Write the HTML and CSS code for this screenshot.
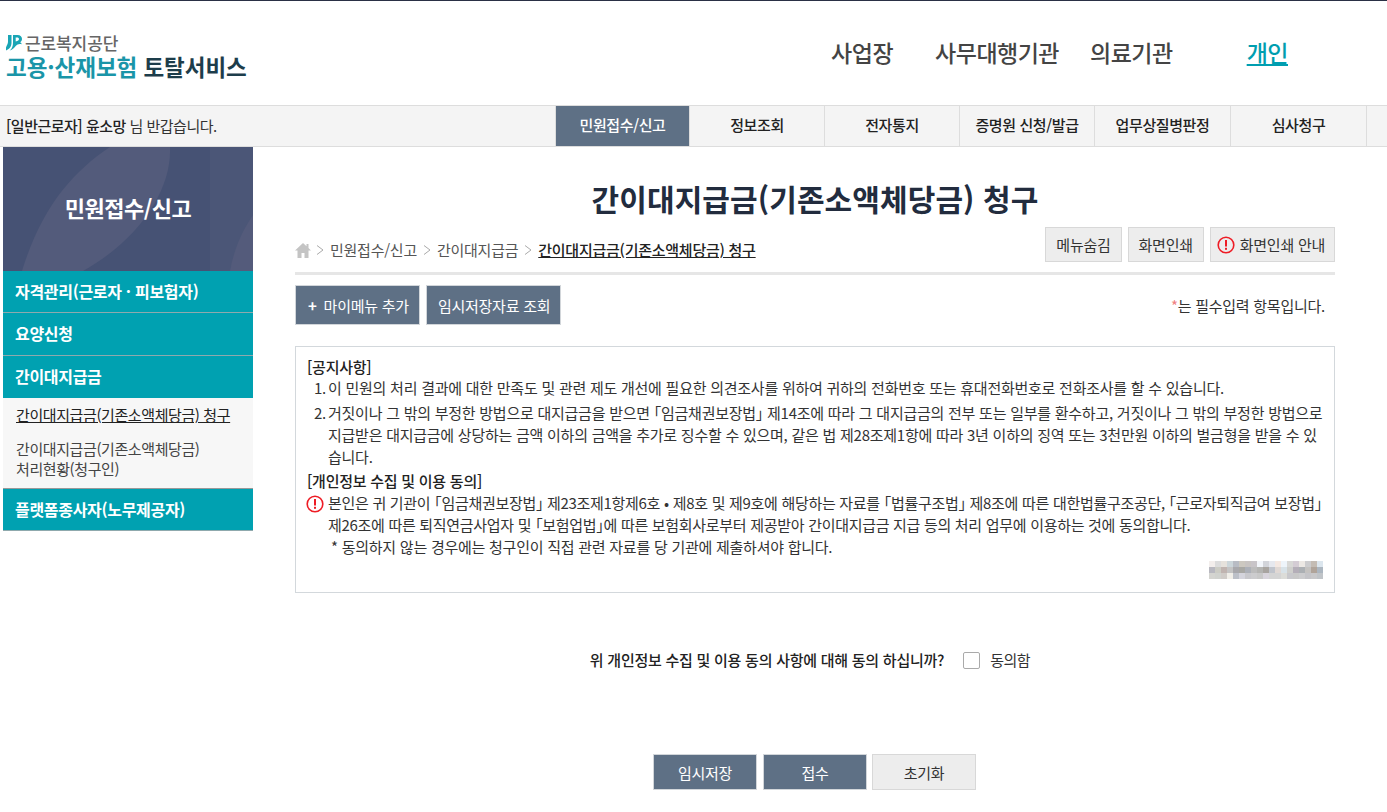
FILE: index.html
```html
<!DOCTYPE html>
<html lang="ko">
<head>
    <meta charset="UTF-8">
    <title>간이대지급금(기존소액체당금) 청구</title>
    <link rel="stylesheet" href="styles.css">
</head>
<body>
    <header class="header">
        <div class="logo">
            <div class="logo-top">
                <svg class="logo-mark" width="16" height="16" viewBox="0 0 16 16">
                    <path d="M2 0h3.500v7.500C5.500 11 4 14 0 15.500c-.5-3 .5-4.500 1.300-6C2 8 2 7 2 6z" fill="#19a5b5"/>
                    <path d="M7 0h4.500C14.500 0 16 1.800 16 4c0 1.500-.8 2.700-2 3.300 1 .4 1.500 1 1.700 2-2-.8-4.500-.3-6 1.700-1.200 1.800-3 3.500-6 4.500 2.500-2 3.300-4.500 3.300-8z" fill="#19a5b5"/>
                    <path d="M9.700 2.400h1.500c1 0 1.800.6 1.800 1.600s-1 1.900-3.300 2.600z" fill="#fff"/>
                </svg>
                <span class="logo-org">근로복지공단</span>
            </div>
            <div class="logo-name"><span class="logo-teal">고용·산재보험</span> 토탈서비스</div>
        </div>
        <nav class="user-nav">
            <a class="un-1">사업장</a>
            <a class="un-2">사무대행기관</a>
            <a class="un-3">의료기관</a>
            <a class="un-4 on">개인</a>
        </nav>
    </header>

    <div class="gnb">
        <p class="welcome"><b>[일반근로자]</b> <b>윤소망</b> 님 반갑습니다.</p>
        <ul class="gnb-list">
            <li class="on w1">민원접수/신고</li>
            <li class="w2">정보조회</li>
            <li class="w2">전자통지</li>
            <li class="w3">증명원 신청/발급</li>
            <li class="w4">업무상질병판정</li>
            <li class="w4 last">심사청구</li>
        </ul>
    </div>

    <div class="wrap">
        <aside class="side">
            <div class="side-title">
                <svg class="side-bg" width="250" height="124" viewBox="0 0 250 124">
                    <path d="M19 124C38 62 68 26 107 0h60c2 42-30 92-87 124z" fill="#535b7b"/>
                    <rect x="207" y="0" width="43" height="124" fill="#4b5677"/>
                    <path d="M227 124c4-22 12-40 23-56v56z" fill="#545b7b"/>
                </svg>
                <span>민원접수/신고</span>
            </div>
            <div class="side-item">자격관리(근로자 · 피보험자)</div>
            <div class="side-item">요양신청</div>
            <div class="side-item no-line">간이대지급금</div>
            <ul class="side-sub">
                <li class="cur">간이대지급금(기존소액체당금) 청구</li>
                <li>간이대지급금(기존소액체당금)<br>처리현황(청구인)</li>
            </ul>
            <div class="side-item">플랫폼종사자(노무제공자)</div>
        </aside>

        <main class="main">
            <h1 class="title">간이대지급금(기존소액체당금) 청구</h1>
            <div class="path-row">
                <div class="path">
                    <svg class="home" width="16" height="16" viewBox="0 0 16 16">
                        <path d="M8 1L0 8.500h2.500V16h4v-5h3v5h4V8.500H16l-2.500-2.400V2h-2v2.200z" fill="#c4c4c4"/>
                    </svg>
                    <svg class="gt" width="8" height="10" viewBox="0 0 8 10"><path d="M1 .5L7 5 1 9.500" fill="none" stroke="#aaa"/></svg>민원접수/신고<svg class="gt" width="8" height="10" viewBox="0 0 8 10"><path d="M1 .5L7 5 1 9.500" fill="none" stroke="#aaa"/></svg>간이대지급금<svg class="gt" width="8" height="10" viewBox="0 0 8 10"><path d="M1 .5L7 5 1 9.500" fill="none" stroke="#aaa"/></svg><b class="path-cur">간이대지급금(기존소액체당금) 청구</b>
                </div>
                <div class="tools">
                    <button class="btn-gray">메뉴숨김</button>
                    <button class="btn-gray">화면인쇄</button>
                    <button class="btn-gray btn-info">
                        <svg width="18" height="18" viewBox="0 0 18 18">
                            <circle cx="9" cy="9" r="7.800" fill="none" stroke="#ee1c25" stroke-width="1.600"/>
                            <rect x="8" y="4" width="2" height="6.500" fill="#ee1c25"/>
                            <rect x="8" y="11.800" width="2" height="2" fill="#ee1c25"/>
                        </svg>
                        화면인쇄 안내
                    </button>
                </div>
            </div>
            <div class="act-row">
                <button class="btn-dark btn-plus"><span class="plus">+</span>마이메뉴 추가</button>
                <button class="btn-dark btn-tmp">임시저장자료 조회</button>
                <p class="req"><i>*</i>는 필수입력 항목입니다.</p>
            </div>

            <section class="notice">
                <h2>[공지사항]</h2>
                <ol>
                    <li>이 민원의 처리 결과에 대한 만족도 및 관련 제도 개선에 필요한 의견조사를 위하여 귀하의 전화번호 또는 휴대전화번호로 전화조사를 할 수 있습니다.</li>
                    <li>거짓이나 그 밖의 부정한 방법으로 대지급금을 받으면 「임금채권보장법」 제14조에 따라 그 대지급금의 전부 또는 일부를 환수하고, 거짓이나 그 밖의 부정한 방법으로<br>지급받은 대지급금에 상당하는 금액 이하의 금액을 추가로 징수할 수 있으며, 같은 법 제28조제1항에 따라 3년 이하의 징역 또는 3천만원 이하의 벌금형을 받을 수 있<br>습니다.</li>
                </ol>
                <h2>[개인정보 수집 및 이용 동의]</h2>
                <div class="agree-text">
                    <svg width="18" height="18" viewBox="0 0 18 18">
                        <circle cx="9" cy="9" r="7.800" fill="none" stroke="#ee1c25" stroke-width="1.600"/>
                        <rect x="8" y="4" width="2" height="6.500" fill="#ee1c25"/>
                        <rect x="8" y="11.800" width="2" height="2" fill="#ee1c25"/>
                    </svg>
                    <p>본인은 귀 기관이 「임금채권보장법」 제23조제1항제6호 • 제8호 및 제9호에 해당하는 자료를 「법률구조법」 제8조에 따른 대한법률구조공단, 「근로자퇴직급여 보장법」<br>제26조에 따른 퇴직연금사업자 및 「보험업법」에 따른 보험회사로부터 제공받아 간이대지급금 지급 등의 처리 업무에 이용하는 것에 동의합니다.</p>
                </div>
                <p class="note">* 동의하지 않는 경우에는 청구인이 직접 관련 자료를 당 기관에 제출하셔야 합니다.</p>
                <svg class="mosaic" width="114" height="18" viewBox="0 0 19 3" shape-rendering="crispEdges">
                    <g id="r1">
                        <rect x="0" y="0" width="1" height="1" fill="#f3eeec"/><rect x="1" y="0" width="1" height="1" fill="#dcdcdc"/><rect x="2" y="0" width="1" height="1" fill="#e6e2dc"/><rect x="3" y="0" width="1" height="1" fill="#ccd6da"/><rect x="4" y="0" width="1" height="1" fill="#b8bcc4"/><rect x="5" y="0" width="1" height="1" fill="#ccc8c0"/><rect x="6" y="0" width="1" height="1" fill="#c8c4c2"/><rect x="7" y="0" width="1" height="1" fill="#c8c4c8"/><rect x="8" y="0" width="1" height="1" fill="#f2f5fa"/><rect x="9" y="0" width="1" height="1" fill="#d2d4da"/><rect x="10" y="0" width="1" height="1" fill="#e6e8ee"/><rect x="11" y="0" width="1" height="1" fill="#f4e8e2"/><rect x="12" y="0" width="1" height="1" fill="#eef4fa"/><rect x="13" y="0" width="1" height="1" fill="#d8d8d6"/><rect x="14" y="0" width="1" height="1" fill="#d4ccd4"/><rect x="15" y="0" width="1" height="1" fill="#ece8e4"/><rect x="16" y="0" width="1" height="1" fill="#ccccce"/><rect x="17" y="0" width="1" height="1" fill="#c4bcb4"/><rect x="18" y="0" width="1" height="1" fill="#dce6ee"/>
                    </g>
                    <g id="r2">
                        <rect x="0" y="1" width="1" height="1" fill="#b8b8c0"/><rect x="1" y="1" width="1" height="1" fill="#ccccc4"/><rect x="2" y="1" width="1" height="1" fill="#c0b4b0"/><rect x="3" y="1" width="1" height="1" fill="#c4c4c4"/><rect x="4" y="1" width="1" height="1" fill="#a8a8ac"/><rect x="5" y="1" width="1" height="1" fill="#a8a8a4"/><rect x="6" y="1" width="1" height="1" fill="#acb0b8"/><rect x="7" y="1" width="1" height="1" fill="#bcbcbc"/><rect x="8" y="1" width="1" height="1" fill="#b4b4b2"/><rect x="9" y="1" width="1" height="1" fill="#a8a4a0"/><rect x="10" y="1" width="1" height="1" fill="#c0c4cc"/><rect x="11" y="1" width="1" height="1" fill="#e0d8d4"/><rect x="12" y="1" width="1" height="1" fill="#d8e2e8"/><rect x="13" y="1" width="1" height="1" fill="#cfcfcc"/><rect x="14" y="1" width="1" height="1" fill="#b4aeb8"/><rect x="15" y="1" width="1" height="1" fill="#acb0b4"/><rect x="16" y="1" width="1" height="1" fill="#c4c2c0"/><rect x="17" y="1" width="1" height="1" fill="#b0a49a"/><rect x="18" y="1" width="1" height="1" fill="#acb6c0"/>
                    </g>
                    <g id="r3">
                        <rect x="0" y="2" width="1" height="1" fill="#d4d4d0"/><rect x="1" y="2" width="1" height="1" fill="#d0d2ce"/><rect x="2" y="2" width="1" height="1" fill="#d0ccc8"/><rect x="3" y="2" width="1" height="1" fill="#f0eee8"/><rect x="4" y="2" width="1" height="1" fill="#bcc0c8"/><rect x="5" y="2" width="1" height="1" fill="#d4d4dc"/><rect x="6" y="2" width="1" height="1" fill="#c8c8cc"/><rect x="7" y="2" width="1" height="1" fill="#ccccce"/><rect x="8" y="2" width="1" height="1" fill="#c8c8c8"/><rect x="9" y="2" width="1" height="1" fill="#d8d4dc"/><rect x="10" y="2" width="1" height="1" fill="#d4d4d4"/><rect x="11" y="2" width="1" height="1" fill="#d4d4d4"/><rect x="12" y="2" width="1" height="1" fill="#dcdcd8"/><rect x="13" y="2" width="1" height="1" fill="#c8c8cc"/><rect x="14" y="2" width="1" height="1" fill="#c8c8c8"/><rect x="15" y="2" width="1" height="1" fill="#ccccce"/><rect x="16" y="2" width="1" height="1" fill="#c4c4c8"/><rect x="17" y="2" width="1" height="1" fill="#c8c8ca"/><rect x="18" y="2" width="1" height="1" fill="#c0c4c8"/>
                    </g>
                </svg>
            </section>

            <div class="agree-row">
                <b>위 개인정보 수집 및 이용 동의 사항에 대해 동의 하십니까?</b>
                <span class="check"></span>
                <span class="check-label">동의함</span>
            </div>

            <div class="bottom-btns">
                <button class="btn-dark btn-b">임시저장</button>
                <button class="btn-dark btn-b">접수</button>
                <button class="btn-gray btn-b btn-reset">초기화</button>
            </div>
        </main>
    </div>
</body>
</html>
```
FILE: styles.css
```css
* {
    box-sizing: border-box;
}
body {
    margin: 0;
    border-top: 1px solid #2a3045;
    background: #fff;
    color: #333;
    font-family: "Noto Sans CJK KR", "Noto Sans", sans-serif;
    font-size: 15px;
    letter-spacing: -0.25px;
}
ul, ol {
    list-style: none;
    margin: 0;
    padding: 0;
}
p, h1, h2 {
    margin: 0;
}
button {
    font-family: inherit;
    letter-spacing: inherit;
    cursor: pointer;
}

/* header */
.header {
    height: 104px;
    display: flex;
    justify-content: space-between;
    padding: 32px 0 0 6px;
}
.logo-top {
    display: flex;
    align-items: center;
    gap: 3px;
    height: 20px;
}
.logo-org {
    font-size: 17px;
    font-weight: 500;
    color: #666;
    letter-spacing: -0.1px;
    line-height: 20px;
}
.logo-name {
    font-size: 22.500px;
    font-weight: 700;
    color: #1d3d4b;
    line-height: 26px;
    letter-spacing: -0.05px;
}
.logo-teal {
    color: #1a95a8;
}
.user-nav {
    display: flex;
    height: 38px;
    font-size: 23px;
    font-weight: 500;
    color: #444;
    line-height: 38px;
    letter-spacing: -0.5px;
}
.un-1 { margin-right: 42px; }
.un-2 { margin-right: 31px; }
.un-3 { margin-right: 74px; }
.un-4 { margin-right: 99px; }
.user-nav .on {
    color: #009eb0;
    text-decoration: underline;
}

/* top menu */
.gnb {
    height: 42px;
    display: flex;
    justify-content: space-between;
    background: #f4f4f4;
    border-top: 1px solid #ddd;
    border-bottom: 1px solid #ddd;
}
.welcome {
    padding-left: 6px;
    line-height: 40px;
    letter-spacing: -0.5px;
}
.welcome b {
    font-weight: 500;
    color: #222;
}
.gnb-list {
    display: flex;
    margin-right: 20px;
    border-left: 1px solid #ddd;
}
.gnb-list li {
    text-align: center;
    line-height: 38px;
    border-right: 1px solid #ddd;
    font-weight: 500;
    color: #222;
    letter-spacing: -0.4px;
}
.gnb-list .on {
    background: #5e7085;
    color: #fff;
}
.w1 { width: 134px; }
.w2 { width: 135px; }
.w3 { width: 135px; }
.w4 { width: 136px; }

/* body layout */
.wrap {
    display: flex;
    padding-left: 3px;
}
.side {
    width: 250px;
    flex-shrink: 0;
}
.side-title {
    position: relative;
    height: 124px;
    background: #465274;
    color: #fff;
    font-size: 22px;
    font-weight: 700;
    line-height: 120px;
    text-align: center;
    overflow: hidden;
    letter-spacing: -0.5px;
}
.side-bg {
    position: absolute;
    left: 0;
    top: 0;
}
.side-title span {
    position: relative;
}
.side-item {
    height: 42.340px;
    padding-left: 12px;
    background: #00a1b1;
    border-bottom: 1px solid #8fa9ad;
    color: #fff;
    font-size: 16px;
    font-weight: 700;
    line-height: 40px;
    letter-spacing: -0.3px;
}
.side-item.no-line {
    border-bottom: 0;
}
.side-sub {
    height: 91px;
    background: #f7f7f7;
    border-bottom: 1px solid #999;
    padding: 0 13px;
}
.side-sub li {
    line-height: 20px;
    margin-bottom: 14px;
    padding-top: 7px;
    color: #444;
    letter-spacing: -0.4px;
}
.side-sub li + li {
    padding-top: 0;
}
.side-sub .cur {
    text-decoration: underline;
    color: #222;
}

/* main */
.main {
    width: 1040px;
    margin-left: 42px;
}
.title {
    height: 53px;
    padding-top: 28px;
    font-size: 30px;
    font-weight: 700;
    color: #222c3e;
    line-height: 46px;
    text-align: center;
    letter-spacing: 0.1px;
}
.path-row {
    height: 75px;
    padding-top: 27px;
    display: flex;
    justify-content: space-between;
    align-items: flex-start;
    border-bottom: 3px solid #e6e6e6;
}
.path {
    display: flex;
    align-items: center;
    height: 35px;
    color: #555;
    padding-top: 10px;
}
.home {
    margin-right: 5px;
}
.gt {
    margin: 1px 6px 0;
}
.home + .gt {
    margin-left: 0;
}
.path-cur {
    font-weight: 500;
    color: #222;
    text-decoration: underline;
}
.tools {
    display: flex;
    gap: 6px;
}
.btn-gray {
    height: 35px;
    padding: 0 10px;
    background: #ededed;
    border: 1px solid #d8d8d8;
    color: #333;
    font-size: 15px;
}
.btn-info {
    display: flex;
    align-items: center;
    gap: 5px;
    padding: 0 9px 0 6px;
}
.act-row {
    display: flex;
    align-items: center;
    gap: 6px;
    margin-top: 10px;
}
.btn-dark {
    height: 40px;
    padding: 0 11px;
    background: #5e7085;
    border: 1px solid #d2d6da;
    color: #fff;
    font-size: 15px;
}
.btn-plus {
    padding: 0 10px 0 12px;
}
.btn-tmp {
    padding: 0 10px 0 11px;
}
.plus {
    font-weight: 700;
    margin-right: 7px;
}
.req {
    margin-left: auto;
    padding-right: 10px;
    color: #333;
}
.req i {
    color: #f08080;
    font-style: normal;
}

/* notice box */
.notice {
    height: 247px;
    margin-top: 21px;
    padding: 9px 11px 0;
    border: 1px solid #d3d8dc;
    line-height: 22px;
    font-feature-settings: "halt";
    white-space: nowrap;
}
.notice h2 {
    font-size: 15px;
    font-weight: 500;
    color: #222;
}
.notice ol {
    counter-reset: n;
    margin-top: -1px;
}
.notice li {
    position: relative;
    counter-increment: n;
    padding-left: 21px;
    margin-bottom: 2px;
}
.notice li:first-child {
    margin-bottom: 3px;
}
.notice li::before {
    content: counter(n) ".";
    position: absolute;
    left: 7px;
}
.agree-text {
    display: flex;
    gap: 4px;
    margin-left: -1px;
    letter-spacing: -0.3px;
}
.agree-text svg {
    flex-shrink: 0;
    margin-top: 3px;
}
.note {
    padding-left: 24px;
}
.mosaic {
    display: block;
    margin: 3px 0 0 auto;
}

/* agree */
.agree-row {
    display: flex;
    align-items: center;
    justify-content: center;
    margin-top: 53px;
    padding-right: 10px;
    height: 26px;
}
.agree-row b {
    font-weight: 500;
    color: #222;
    margin-right: 19px;
}
.check {
    width: 17px;
    height: 17px;
    margin: 3px 10px 0 0;
    border: 1px solid #aaa;
    border-radius: 2px;
    background: #fff;
}
.check-label {
    letter-spacing: -0.5px;
}
.bottom-btns {
    display: flex;
    justify-content: center;
    gap: 6px;
    margin-top: 82px;
    padding-right: 1px;
}
.btn-b {
    width: 104px;
    height: 36px;
    padding: 0;
    border-width: 1px;
    font-size: 15px;
}
.btn-reset {
    margin-left: -1px;
}
```
